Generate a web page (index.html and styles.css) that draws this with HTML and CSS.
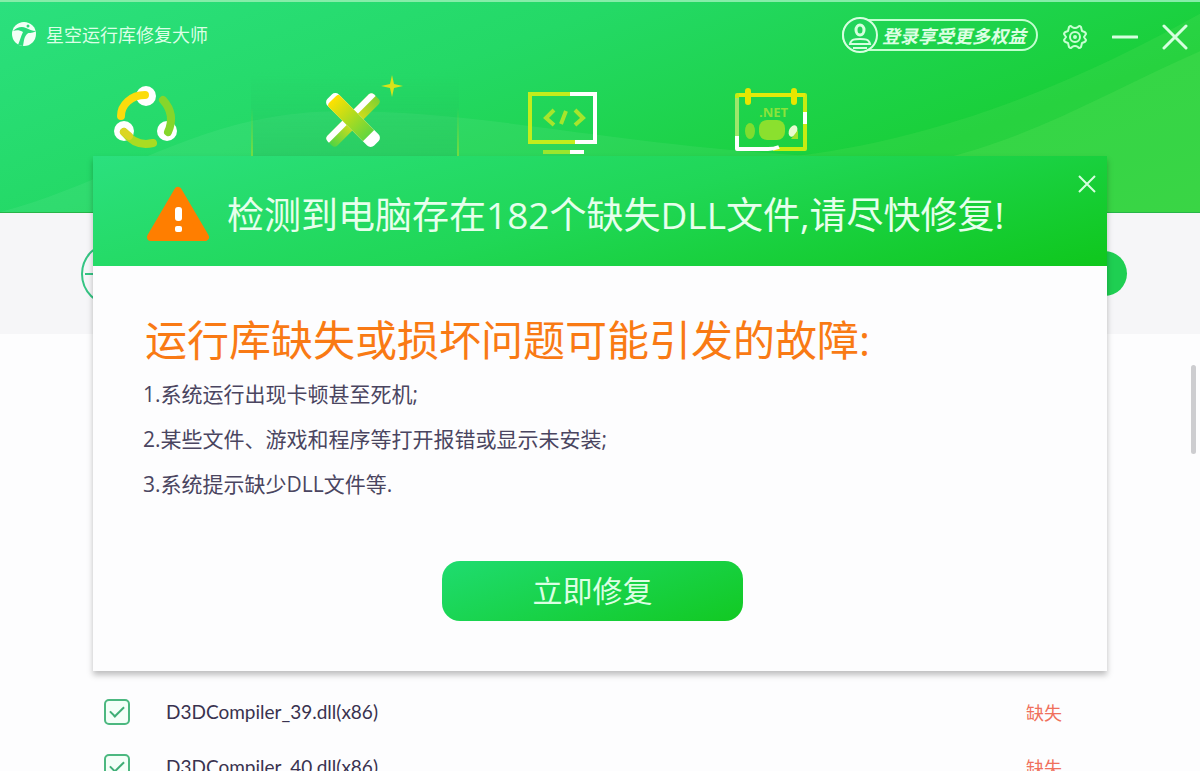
FILE: index.html
```
<!DOCTYPE html>
<html lang="zh-CN">
<head>
  <meta charset="UTF-8">
  <title>星空运行库修复大师</title>
  <link rel="stylesheet" href="styles.css">
</head>
<body>
  <header class="header">
    <svg class="waves" viewBox="0 0 1200 213" preserveAspectRatio="none" aria-hidden="true">
      <path d="M0 213 C110 185 200 113 330 111 C480 108 600 145 840 158 L840 213 Z" fill="#fff" opacity=".06"/>
      <path d="M760 160 C930 146 1080 80 1200 12 V213 H760 Z" fill="#5be05b" opacity=".22"/>
      <path d="M930 162 C1030 140 1110 90 1200 50 V213 H930 Z" fill="#7bea6a" opacity=".18"/>
    </svg>

    <div class="titlebar">
      <svg class="logo" viewBox="0 0 24 24" aria-hidden="true">
        <circle cx="12" cy="12" r="12" fill="#f2fff6"/>
        <path d="M1 9 C5 5 10 4 14 6 C17 7 20 9 24 9 C19 12 17 10 15 12 C12 15 12 19 11 24 L6 23 C8 18 9 14 11 10 C8 8 4 8 1 9 Z" fill="#2bdc7c"/>
        <circle cx="16" cy="4" r="1.5" fill="#2bdc7c"/>
      </svg>
      <span class="app-name">星空运行库修复大师</span>

      <button class="login">
        <svg viewBox="0 0 36 36" aria-hidden="true">
          <circle cx="18" cy="18" r="17" fill="#22d45c" stroke="#d6ffdf" stroke-width="2"/>
          <ellipse cx="18" cy="13" rx="4" ry="5" fill="none" stroke="#d6ffdf" stroke-width="3"/>
          <path d="M8 27 C9 22 13 22 18 22 C23 22 27 22 28 27 Z" fill="none" stroke="#d6ffdf" stroke-width="2"/>
          <path d="M11 31 H25" stroke="#d6ffdf" stroke-width="2"/>
        </svg>
        <span>登录享受更多权益</span>
      </button>
      <button class="icon-btn settings" aria-label="设置">
        <svg width="26" height="26" viewBox="0 0 26 26" fill="none" stroke="#c8ffd2" stroke-width="2" stroke-linejoin="round">
          <path d="M7 3 Q9 1 10 3 Q13 5 16 3 Q17 1 19 3 L20 7 Q24 8 24 10 L22 13 L24 16 Q24 18 20 19 L19 23 Q17 25 16 23 Q13 21 10 23 Q9 25 7 23 L6 19 Q2 18 2 16 L4 13 L2 10 Q2 8 6 7 Z"/>
          <circle cx="13" cy="13" r="5"/>
          <circle cx="13" cy="13" r="1"/>
        </svg>
      </button>
      <button class="icon-btn minimize" aria-label="最小化">
        <svg width="26" height="26" viewBox="0 0 26 26"><path d="M1 13 H25" stroke="#d6ffdf" stroke-width="3" stroke-linecap="round"/></svg>
      </button>
      <button class="icon-btn" aria-label="关闭">
        <svg width="26" height="26" viewBox="0 0 26 26"><path d="M2 2 L24 24 M24 2 L2 24" stroke="#d6ffdf" stroke-width="3" stroke-linecap="round"/></svg>
      </button>
    </div>

    <nav class="tabs">
      <button class="tab" aria-label="运行库">
        <svg width="80" height="80" viewBox="0 -4 80 80" fill="none" stroke-linecap="round">
          <circle cx="39" cy="18" r="10" fill="#fff"/>
          <circle cx="17" cy="53" r="10" fill="#fff"/>
          <circle cx="60" cy="53" r="10" fill="#fff"/>
          <path d="M14 38 C14 27 24 17 38 17" stroke="#fbdc0c" stroke-width="8"/>
          <path d="M17 54 C24 63 34 68 46 65" stroke="#a9dc22" stroke-width="8"/>
          <path d="M17 54 L22 58" stroke="#dbd525" stroke-width="8"/>
          <path d="M56 22 C65 32 66 43 61 54" stroke="#85d62b" stroke-width="8"/>
        </svg>
      </button>
      <button class="tab active" aria-label="修复工具">
        <svg width="80" height="80" viewBox="0 0 80 80">
          <defs>
            <linearGradient id="bar" x1="0" y1="0" x2="1" y2="0">
              <stop offset="0" stop-color="#ffe100"/>
              <stop offset="1" stop-color="#62d63e"/>
            </linearGradient>
            <linearGradient id="bar2" x1="0" y1="0" x2="1" y2="0">
              <stop offset="0" stop-color="#52d443"/>
              <stop offset=".5" stop-color="#e5df15"/>
              <stop offset="1" stop-color="#7ed132"/>
            </linearGradient>
          </defs>
          <g transform="rotate(-45 38 46)">
            <rect x="5" y="39" width="66" height="14" rx="4" fill="url(#bar2)"/>
            <path d="M9 39 H67 Q71 39 71 43 V45 H5 V43 Q5 39 9 39 Z" fill="#fff"/>
          </g>
          <g transform="rotate(45 38 46)">
            <rect x="5" y="38" width="66" height="16" rx="5" fill="#fff"/>
            <path d="M11 38 H60 V54 H12 Q9 54 9 50 V42 Q9 38 11 38 Z" fill="url(#bar)"/>
          </g>
          <path d="M77 1 L79 10 L88 12 L79 14 L77 23 L75 14 L66 12 L75 10 Z" fill="#d8e31a"/>
        </svg>
      </button>
      <button class="tab" aria-label="代码组件">
        <svg width="80" height="80" viewBox="0 0 80 80" fill="none" stroke-width="4">
          <path d="M50 20 H7 V68 H56" stroke="#c3ed1c"/>
          <path d="M47 20 H72 V68 H52" stroke="#fff"/>
          <path d="M31 36 L23 44 L31 51 M43 37 L38 50 M52 36 L60 44 L52 51" stroke="#a6e52c"/>
          <path d="M20 78 H50" stroke="#9be62e"/>
          <path d="M47 78 H61" stroke="#fff"/>
        </svg>
      </button>
      <button class="tab" aria-label=".NET">
        <svg width="80" height="80" viewBox="0 0 80 80" fill="none" stroke-width="4" stroke-linejoin="round">
          <path d="M6 70 V21 H74 V75 H42" stroke="#c6ec12"/>
          <path d="M6 60 V75 H37 Q43 75 48 73" stroke="#fff"/>
          <path d="M6 24 V62" stroke="#9de76b"/>
          <path d="M8 21 H74" stroke="#e2ea0a"/>
          <path d="M74 38 V50" stroke="#fff"/>
          <path d="M17 17 V28 M63 17 V28" stroke="#e8e600" stroke-width="6" stroke-linecap="round"/>
          <text x="28" y="43" class="net">.NET</text>
          <rect x="28" y="46" width="26" height="20" rx="8" fill="#8be02e"/>
          <ellipse cx="19" cy="57" rx="5" ry="8" fill="#7fdd2f"/>
          <ellipse cx="62" cy="57" rx="4" ry="6" fill="#e9fbd0" transform="rotate(25 62 57)"/>
          <path d="M60 65 L67 56 V65 Z" fill="#9de32a"/>
        </svg>
      </button>
    </nav>
  </header>

  <section class="toolbar">
    <svg class="globe" width="64" height="64" viewBox="0 0 64 64" fill="none" stroke="#35c483" stroke-width="2" aria-hidden="true">
      <circle cx="32" cy="32" r="31"/>
      <path d="M4 32 H60 M32 1 V63"/>
      <ellipse cx="32" cy="32" rx="14" ry="31"/>
    </svg>
    <button class="scan-btn" aria-label="扫描"></button>
  </section>

  <ul class="dll-list">
    <li>
      <input type="checkbox" id="dll39" checked>
      <label for="dll39">D3DCompiler_39.dll(x86)</label>
      <span class="status">缺失</span>
    </li>
    <li>
      <input type="checkbox" id="dll40" checked>
      <label for="dll40">D3DCompiler_40.dll(x86)</label>
      <span class="status">缺失</span>
    </li>
  </ul>
  <div class="scroll-thumb"></div>

  <div class="modal" role="dialog" aria-labelledby="modal-title">
    <div class="modal-header">
      <svg width="66" height="60" viewBox="0 0 66 60" aria-hidden="true">
        <path d="M33 6 L60 52 H6 Z" fill="#ff7e00" stroke="#ff7e00" stroke-width="8" stroke-linejoin="round"/>
        <rect x="30" y="22" width="7" height="14" rx="3" fill="#fff"/>
        <rect x="30" y="41" width="7" height="6" rx="2" fill="#fff"/>
      </svg>
      <h1 id="modal-title">检测到电脑存在182个缺失DLL文件,请尽快修复!</h1>
      <button class="modal-close" aria-label="关闭">
        <svg width="18" height="18" viewBox="0 0 18 18"><path d="M1 1 L17 17 M17 1 L1 17" stroke="#d6ffdf" stroke-width="2"/></svg>
      </button>
    </div>
    <div class="modal-body">
      <h2>运行库缺失或损坏问题可能引发的故障:</h2>
      <p>1.系统运行出现卡顿甚至死机;</p>
      <p>2.某些文件、游戏和程序等打开报错或显示未安装;</p>
      <p>3.系统提示缺少DLL文件等.</p>
      <button class="fix-btn">立即修复</button>
    </div>
  </div>
</body>
</html>
```
FILE: styles.css
```
* { box-sizing: border-box; }
body { margin: 0; height: 100vh; overflow: hidden; position: relative; background: #fdfdfe; font-family: "Open Sans", "Noto Sans CJK SC", sans-serif; color: #39324f; }
button { padding: 0; border: none; background: none; font-family: inherit; cursor: pointer; }
svg { display: block; flex: none; }

/* header */
.header { position: relative; height: 213px; background: linear-gradient(160deg, #2be07e 0%, #24d966 35%, #19cf38 75%, #1fcd37 100%); border-top: 2px solid #86eda9; border-bottom: 1px solid #27b548; }
.waves { position: absolute; top: 0; left: 0; width: 100%; height: 100%; }
.titlebar { position: relative; display: flex; align-items: center; height: 70px; padding: 0 12px; color: #dcffe6; }
.logo { width: 24px; height: 24px; margin-bottom: 6px; }
.app-name { margin: 0 0 6px 10px; font-size: 18px; }
.login { display: flex; align-items: center; height: 32px; margin: 0 0 4px auto; padding-right: 10px; border: 2px solid #c2ffcf; border-radius: 16px; color: #dcffe3; font-size: 18px; font-weight: bold; font-style: italic; }
.login svg { width: 36px; height: 36px; margin-left: -2px; }
.login span { margin-left: 4px; }
.icon-btn { margin-left: 24px; }
.tabs { position: relative; display: flex; padding-left: 43px; }
.tab { display: flex; justify-content: center; width: 208px; height: 90px; padding-top: 2px; }
.tab svg { overflow: visible; }
.tab.active { background: linear-gradient(rgba(30, 190, 90, 0), rgba(35, 190, 95, 0.45)); border: solid; border-width: 0 2px; border-image: linear-gradient(transparent 40%, #7fe03c) 1; }
.net { fill: #8be33a; font: bold 13px "Open Sans", sans-serif; }

/* toolbar under the header */
.toolbar { display: flex; align-items: center; justify-content: space-between; height: 121px; padding: 0 73px 0 81px; background: #f6f6f8; }
.scan-btn { width: 180px; height: 45px; border-radius: 23px; background: #1fcf52; }

/* dll list */
.dll-list { margin: 0; padding: 350px 138px 0 104px; list-style: none; }
.dll-list li { display: flex; align-items: center; height: 55px; }
.dll-list input { appearance: none; width: 26px; height: 26px; margin: 0 36px 0 0; border: 2px solid #4cb880; border-radius: 5px; background: #f4fff8; display: grid; place-items: center; }
.dll-list input:checked::before { content: ""; width: 12px; height: 6px; margin-top: -4px; border: solid #3fae76; border-width: 0 0 2px 2px; transform: rotate(-45deg); }
.dll-list label { font-family: Lato, sans-serif; font-size: 19px; }
.status { margin-left: auto; font-size: 18px; color: #f0705c; }
.scroll-thumb { position: absolute; right: 4px; top: 365px; width: 5px; height: 89px; border-radius: 3px; background: #cdcdd0; }

/* modal */
.modal { position: absolute; top: 156px; left: 93px; right: 93px; background: #fdfdfe; box-shadow: 0 4px 6px rgba(0, 0, 0, 0.25); }
.modal-header { position: relative; display: flex; align-items: center; height: 110px; padding: 8px 52px 0; background: linear-gradient(165deg, #2be07e 0%, #20d756 50%, #0fc71c 100%); color: #e6ffec; }
.modal-header h1 { margin: 0 0 4px 16px; font-size: 37px; font-weight: normal; white-space: nowrap; }
.modal-close { position: absolute; top: 19px; right: 11px; }
.modal-body { display: flex; flex-direction: column; height: 405px; padding: 44px 50px 50px; }
.modal-body h2 { margin: 0 0 2px 2px; font-size: 42px; font-weight: normal; line-height: 60px; color: #f97a14; white-space: nowrap; }
.modal-body p { margin: 0; font-size: 21px; line-height: 45px; color: #4a4560; }
.fix-btn { width: 301px; height: 60px; margin: auto auto 0 299px; padding-bottom: 4px; border-radius: 18px; background: linear-gradient(160deg, #1fdc70, #12c922); color: #dcffe3; font-size: 30px; }
```
